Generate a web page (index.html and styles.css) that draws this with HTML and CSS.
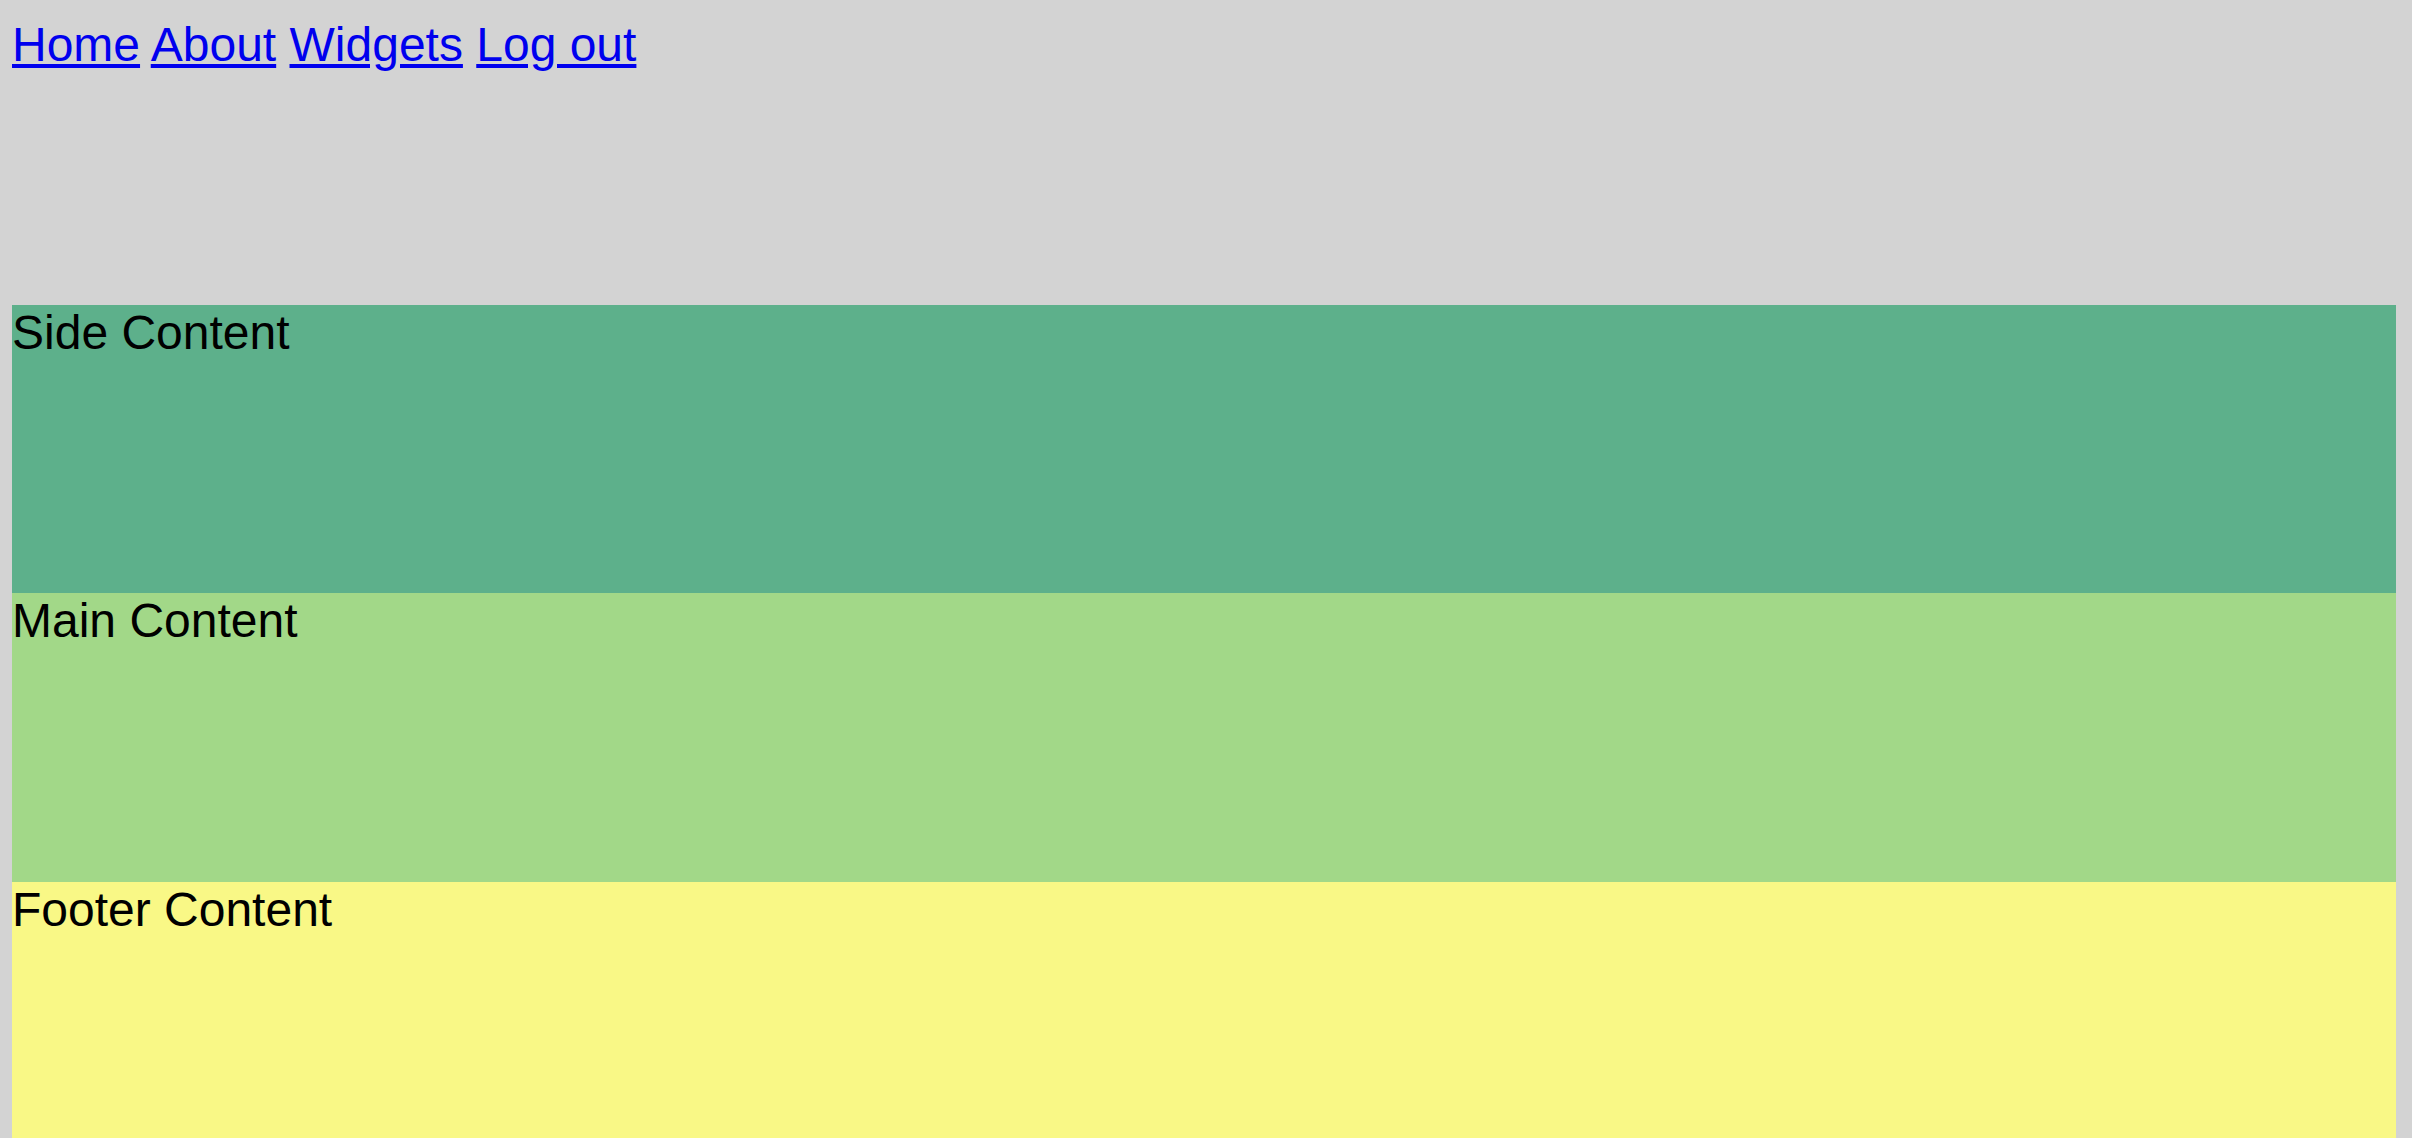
FILE: index.html
```html
<!DOCTYPE html>
<html lang="en">
<head>
<meta charset="utf-8">
<title>Layout</title>
<link rel="stylesheet" href="styles.css">
</head>
<body>
<div class="page">
  <header class="header">
    <nav class="nav">
      <a href="#">Home</a>
      <a href="#">About</a>
      <a href="#">Widgets</a>
      <a href="#">Log out</a>
    </nav>
  </header>
  <aside class="side">Side Content</aside>
  <main class="main">Main Content</main>
  <footer class="footer">Footer Content</footer>
</div>
</body>
</html>
```

FILE: styles.css
```css
html, body {
  margin: 0;
  padding: 0;
}

body {
  background: #d3d3d3;
  font-family: "Liberation Sans", Arial, Helvetica, sans-serif;
  font-size: 48px;
  color: #000;
}

.page {
  display: flex;
  flex-direction: column;
  padding: 12px 16px 12px 12px;
}

.header {
  height: 293px;
  padding-top: 5px;
  box-sizing: border-box;
}

.nav a {
  color: #0000ee;
  text-decoration: underline;
}

.side {
  height: 288px;
  background: #5db08b;
}

.main {
  height: 289px;
  background: #a2d888;
}

.footer {
  height: 288px;
  background: #f9f886;
}
```
